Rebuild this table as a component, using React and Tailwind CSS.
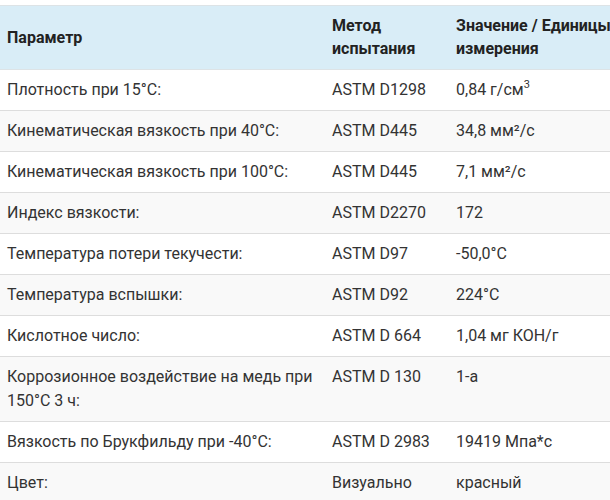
import React from 'react'

const rows = [
  ['Плотность при 15°C:', 'ASTM D1298', <>0,84 г/см<sup className="text-[11px] align-baseline relative -top-[7px]">3</sup></>],
  ['Кинематическая вязкость при 40°C:', 'ASTM D445', '34,8 мм²/с'],
  ['Кинематическая вязкость при 100°C:', 'ASTM D445', '7,1 мм²/с'],
  ['Индекс вязкости:', 'ASTM D2270', '172'],
  ['Температура потери текучести:', 'ASTM D97', '-50,0°C'],
  ['Температура вспышки:', 'ASTM D92', '224°C'],
  ['Кислотное число:', 'ASTM D 664', '1,04 мг КОН/г'],
  ['Коррозионное воздействие на медь при 150°C 3 ч:', 'ASTM D 130', '1-а'],
  ['Вязкость по Брукфильду при -40°C:', 'ASTM D 2983', '19419 Мпа*с'],
  ['Цвет:', 'Визуально', 'красный'],
]

const App = () => {
  return (
    <div className="w-[610px] h-[500px] overflow-hidden bg-white pt-[5px]" style={{ fontFamily: 'Roboto, "Liberation Sans", sans-serif' }}>
      <table className="w-[628px] table-fixed border-collapse text-[16px] text-[#333]">
        <colgroup>
          <col className="w-[324px]" />
          <col className="w-[124px]" />
          <col className="w-[180px]" />
        </colgroup>
        <thead>
          <tr className="bg-[#d9edf7] border-t border-b border-[#dde3e6]">
            <th className="pl-[7px] pr-2 pt-2 pb-[9px] text-left align-middle font-bold text-[#222] leading-[23px]">Параметр</th>
            <th className="px-2 pt-2 pb-[9px] text-left align-middle font-bold text-[#222] leading-[23px]">Метод испытания</th>
            <th className="px-2 pt-2 pb-[9px] text-left align-middle font-bold text-[#222] leading-[23px]">Значение / Единицы измерения</th>
          </tr>
        </thead>
        <tbody>
          {rows.map((r, i) => (
            <tr key={i} className={`border-b border-[#dddddd] ${i % 2 === 1 ? 'bg-[#f9f9f9]' : 'bg-white'}`}>
              <td className="pl-[7px] pr-2 py-2 align-top leading-6">{r[0]}</td>
              <td className="px-2 py-2 align-top leading-6">{r[1]}</td>
              <td className="px-2 py-2 align-top leading-6">{r[2]}</td>
            </tr>
          ))}
        </tbody>
      </table>
    </div>
  )
}

export default App
